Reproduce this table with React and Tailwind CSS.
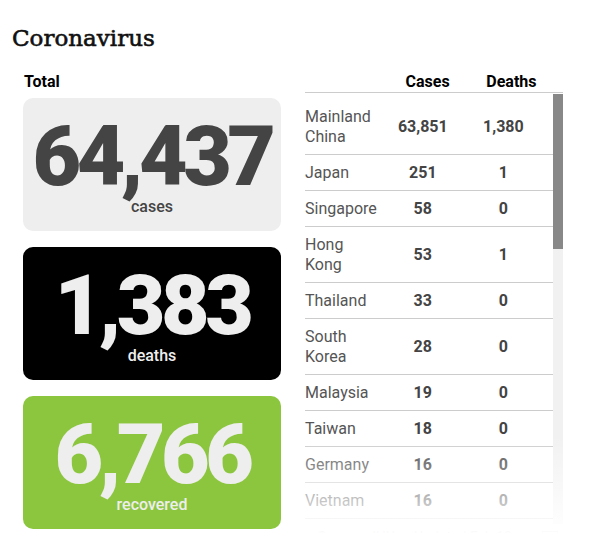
import React from "react";

const rows = [
  { name: ["Mainland", "China"], cases: "63,851", deaths: "1,380" },
  { name: ["Japan"], cases: "251", deaths: "1" },
  { name: ["Singapore"], cases: "58", deaths: "0" },
  { name: ["Hong", "Kong"], cases: "53", deaths: "1" },
  { name: ["Thailand"], cases: "33", deaths: "0" },
  { name: ["South", "Korea"], cases: "28", deaths: "0" },
  { name: ["Malaysia"], cases: "19", deaths: "0" },
  { name: ["Taiwan"], cases: "18", deaths: "0" },
  { name: ["Germany"], cases: "16", deaths: "0" },
  { name: ["Vietnam"], cases: "16", deaths: "0" },
  { name: ["United", "States"], cases: "15", deaths: "0" },
  { name: ["France"], cases: "11", deaths: "0" },
];

function Card({ value, label, bg, fg }) {
  return (
    <div className={`flex flex-col items-center rounded-[10px] pt-[17px] pb-[14px] ${bg} ${fg}`}>
      <div className="text-[84px] leading-none font-black tracking-[-4.5px]">{value}</div>
      <div className="mt-[-2px] text-[16px] leading-[20px] font-medium">{label}</div>
    </div>
  );
}

export default function App() {
  return (
    <div
      className="h-[533px] w-[601px] overflow-hidden bg-white"
      style={{ fontFamily: "Roboto, 'Liberation Sans', sans-serif" }}
    >
      <h1
        className="pl-[12px] pt-[20px] text-[23px] leading-[36px] text-[#111111] [-webkit-text-stroke:0.6px_#111111]"
        style={{ fontFamily: "'DejaVu Serif', 'Liberation Serif', serif" }}
      >
        Coronavirus
      </h1>
      <div className="mt-[16px] flex gap-[24px] pl-[23px]">
        <div className="flex w-[258px] flex-col">
          <div className="pl-[1px] text-[16px] leading-[20px] font-bold text-black">Total</div>
          <div className="mt-[6px] flex flex-col gap-[16px]">
            <Card value="64,437" label="cases" bg="bg-[#eeeeee]" fg="text-[#444444]" />
            <Card value="1,383" label="deaths" bg="bg-black" fg="text-[#eeeeee]" />
            <Card value="6,766" label="recovered" bg="bg-[#8cc63f]" fg="text-[#eeeeee]" />
          </div>
        </div>
        <div className="relative flex w-[258px] flex-col">
          <div className="flex border-b border-[#cccccc] text-[16px] leading-[20px] font-bold text-black">
            <div className="w-[35%]" />
            <div className="w-[25%] text-center">Cases</div>
            <div className="w-[40%] text-center">Deaths</div>
          </div>
          <div className="mt-[1px] flex h-[430px] overflow-hidden">
            <div className="flex w-[248px] flex-col pt-[5px]">
              {rows.map((r) => (
                <div
                  key={r.name.join(" ")}
                  className={`flex shrink-0 items-center border-b border-[#cccccc] text-[16px] leading-[20px] ${
                    r.name.length > 1 ? "h-[56px]" : "h-[36px]"
                  }`}
                >
                  <div className="flex w-[35%] flex-col text-[#555555]">
                    {r.name.map((n) => (
                      <span key={n}>{n}</span>
                    ))}
                  </div>
                  <div className="w-[25%] text-center font-bold text-[#444444]">{r.cases}</div>
                  <div className="w-[40%] text-center font-bold text-[#444444]">{r.deaths}</div>
                </div>
              ))}
            </div>
            <div className="flex w-[10px] flex-col bg-[#f1f1f1]">
              <div className="h-[155px] bg-[#888888]" />
            </div>
          </div>
          <div className="mt-[4px] flex items-center pl-[13px] pr-[5px] text-[14px] leading-[18px] text-[#777777]">
            <span>Source: JHU</span>
            <span className="ml-auto">Updated Feb 13</span>
            <span className="ml-[30px] h-[12px] w-[16px] border border-[#999999]" />
          </div>
          <div className="pointer-events-none absolute left-[-6px] right-[-6px] top-[363px] h-[100px] bg-gradient-to-b from-white/0 to-white" />
        </div>
      </div>
    </div>
  );
}
